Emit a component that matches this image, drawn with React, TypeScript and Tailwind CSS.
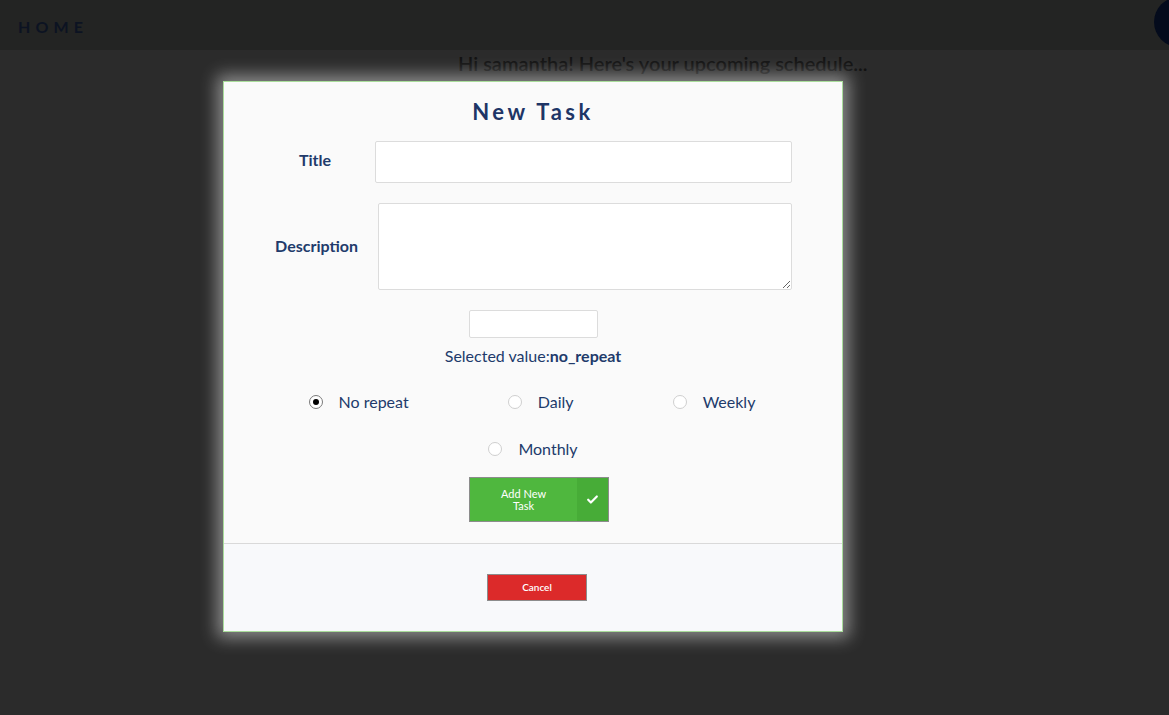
import { useState } from "react";

interface RepeatOption {
    label: string;
    value: string;
}

const repeatOptions: RepeatOption[] = [
    { label: "No repeat", value: "no_repeat" },
    { label: "Daily", value: "daily" },
    { label: "Weekly", value: "weekly" },
    { label: "Monthly", value: "monthly" },
];

function Radio({
    option,
    checked,
    onSelect,
}: {
    option: RepeatOption;
    checked: boolean;
    onSelect: (v: string) => void;
}) {
    return (
        <label
            className="flex items-center gap-[16px] cursor-pointer"
            onClick={() => onSelect(option.value)}
        >
            <span
                className={`flex h-[14px] w-[14px] items-center justify-center rounded-full border bg-white ${checked ? "border-[#7a7a7a]" : "border-[#cfcfcf]"
                    }`}
            >
                {checked && <span className="h-[6px] w-[6px] rounded-full bg-black" />}
            </span>
            <span className="text-[16px] leading-[20px] text-[#213a6b]">{option.label}</span>
        </label>
    );
}

export default function App() {
    const [repeat, setRepeat] = useState("no_repeat");

    return (
        <div className="relative h-[715px] w-full overflow-hidden bg-[#2b2b2b] font-['Lato','Noto_Sans',sans-serif]">
            {/* Header (dimmed by overlay) */}
            <header className="flex h-[50px] items-center bg-[#232423] px-[18px] pt-[3px]">
                <span className="text-[16px] font-bold tracking-[0.32em] text-[#0c1322]">HOME</span>
            </header>
            <div className="absolute -top-[3px] left-[1154px] h-[50px] w-[50px] rounded-full bg-[#040b1c]" />

            <div className="pl-[458px]">
                <h2 className="-mt-[1px] text-[20px] font-semibold leading-[28px] text-[#121212]">
                    Hi samantha! Here's your upcoming schedule...
                </h2>
            </div>

            {/* Modal */}
            <div className="absolute left-[223px] top-[81px] flex h-[551px] w-[620px] flex-col border border-[#a9dd9b] bg-[#fafafa] shadow-[0_0_16px_6px_rgba(255,255,255,0.45)]">
                <div className="flex flex-col px-[35px] pt-[16px]">
                    <h1 className="text-center text-[22px] font-bold leading-[28px] tracking-[0.16em] text-[#1e3566]">
                        New Task
                    </h1>

                    <div className="mt-[15px] flex items-center">
                        <label className="w-[112px] pb-[4px] text-center text-[16px] font-bold text-[#213a6b]">Title</label>
                        <input
                            type="text"
                            className="ml-[4px] h-[42px] w-[417px] rounded-[2px] border border-[#dcdcdc] bg-white px-2 outline-none"
                        />
                    </div>

                    <div className="mt-[20px] flex items-center">
                        <label className="w-[115px] pb-[2px] text-center text-[16px] font-bold text-[#213a6b]">
                            Description
                        </label>
                        <textarea className="ml-[4px] h-[87px] w-[414px] rounded-[2px] border border-[#dcdcdc] bg-white p-2 outline-none" />
                    </div>

                    <div className="mt-[20px] flex justify-center">
                        <input
                            type="text"
                            className="h-[28px] w-[129px] rounded-[2px] border border-[#dcdcdc] bg-white px-2 outline-none"
                        />
                    </div>

                    <p className="mt-[8px] text-center text-[16px] leading-[20px] text-[#213a6b]">
                        Selected value:<span className="font-bold">{repeat}</span>
                    </p>

                    <div className="mt-[26px] flex justify-around pr-[2px]">
                        {repeatOptions.slice(0, 3).map((o) => (
                            <Radio key={o.value} option={o} checked={repeat === o.value} onSelect={setRepeat} />
                        ))}
                    </div>
                    <div className="mt-[27px] flex justify-center">
                        <Radio option={repeatOptions[3]} checked={repeat === "monthly"} onSelect={setRepeat} />
                    </div>

                    <div className="mt-[18px] flex justify-center">
                        <button className="ml-[12px] flex h-[45px] w-[140px] border border-[#8c8c8c] bg-[#4fb73e] text-white">
                            <span className="flex flex-1 items-center justify-center px-[24px] text-[11px] leading-[12px]">
                                Add New Task
                            </span>
                            <span className="flex w-[31px] items-center justify-center bg-[#47ac37]">
                                <svg viewBox="0 0 24 24" className="h-[13px] w-[13px]" fill="none" stroke="white" strokeWidth={4} strokeLinecap="round" strokeLinejoin="round">
                                    <path d="M4 12.5l5 5L20 6.5" />
                                </svg>
                            </span>
                        </button>
                    </div>
                </div>

                <div className="mt-auto flex h-[88px] items-center justify-center border-t border-[#d9d9d9] bg-[#f8f9fb]">
                    <button className="ml-[8px] h-[27px] w-[100px] border border-[#8c8c8c] bg-[#dc2a2a] text-[10px] font-semibold text-white">
                        Cancel
                    </button>
                </div>
            </div>
        </div>
    );
}
